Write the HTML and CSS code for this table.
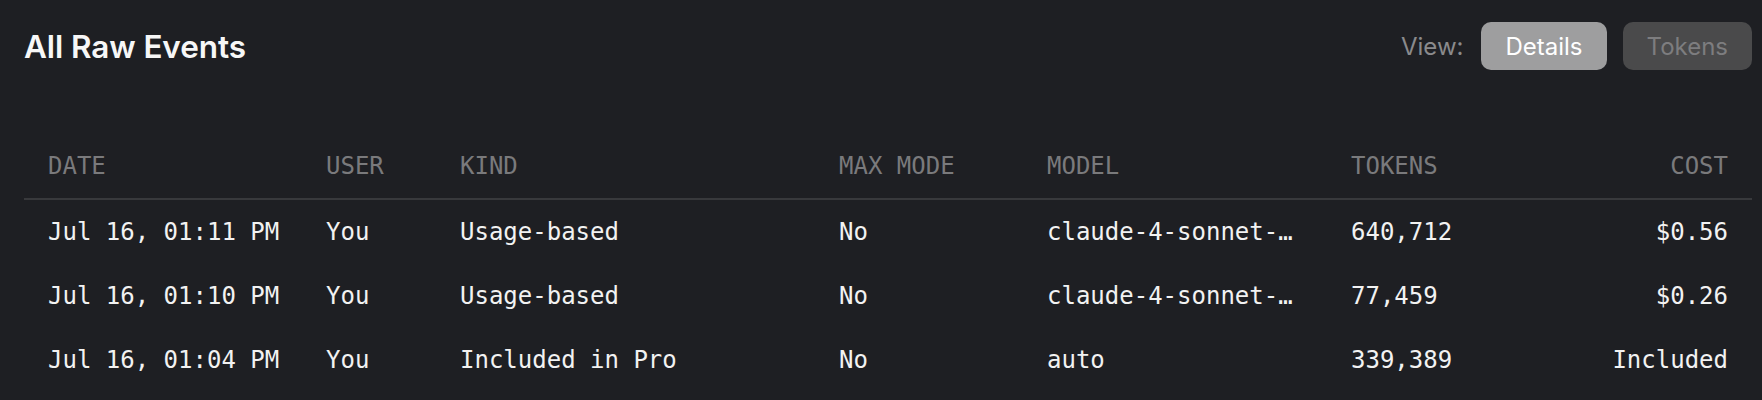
FILE: index.html
```html
<!DOCTYPE html>
<html lang="en">
<head>
<meta charset="utf-8">
<title>All Raw Events</title>
<link rel="stylesheet" href="styles.css">
</head>
<body>
<div class="page">
  <div class="topbar">
    <h1 class="title">All Raw Events</h1>
    <div class="view">
      <span class="view-label">View:</span>
      <button class="seg seg-active">Details</button>
      <button class="seg">Tokens</button>
    </div>
  </div>
  <div class="table">
    <div class="row head">
      <div class="cell">DATE</div>
      <div class="cell">USER</div>
      <div class="cell">KIND</div>
      <div class="cell">MAX MODE</div>
      <div class="cell">MODEL</div>
      <div class="cell">TOKENS</div>
      <div class="cell right">COST</div>
    </div>
    <div class="row">
      <div class="cell">Jul 16, 01:11 PM</div>
      <div class="cell">You</div>
      <div class="cell">Usage-based</div>
      <div class="cell">No</div>
      <div class="cell" title="claude-4-sonnet-thinking">claude-4-sonnet-…</div>
      <div class="cell">640,712</div>
      <div class="cell right">$0.56</div>
    </div>
    <div class="row">
      <div class="cell">Jul 16, 01:10 PM</div>
      <div class="cell">You</div>
      <div class="cell">Usage-based</div>
      <div class="cell">No</div>
      <div class="cell" title="claude-4-sonnet-thinking">claude-4-sonnet-…</div>
      <div class="cell">77,459</div>
      <div class="cell right">$0.26</div>
    </div>
    <div class="row">
      <div class="cell">Jul 16, 01:04 PM</div>
      <div class="cell">You</div>
      <div class="cell">Included in Pro</div>
      <div class="cell">No</div>
      <div class="cell">auto</div>
      <div class="cell">339,389</div>
      <div class="cell right">Included</div>
    </div>
  </div>
</div>
</body>
</html>
```
FILE: styles.css
```css
html, body {
  margin: 0;
  padding: 0;
  background: #1e1f23;
  height: 100%;
}
body {
  font-family: Inter, "Noto Sans", sans-serif;
  color: #f2f2f2;
}
.page {
  padding: 22px 10px 0 24px;
}
.topbar {
  display: flex;
  align-items: center;
  justify-content: space-between;
  height: 48px;
}
.title {
  margin: 0;
  font-size: 31.5px;
  font-weight: 600;
  letter-spacing: -0.1px;
  color: #f7f7f7;
}
.view {
  display: flex;
  align-items: center;
  gap: 16px;
}
.view-label {
  font-size: 24px;
  color: #8a8a8c;
  margin-right: 2px;
}
.seg {
  height: 48px;
  padding: 0 24px;
  border: none;
  border-radius: 10px;
  background: #4a4a4b;
  color: #7d7d7f;
  font-family: Inter, "Noto Sans", sans-serif;
  font-size: 24px;
  font-weight: 400;
}
.seg-active {
  background: #9e9e9f;
  color: #ffffff;
}
.table {
  margin-top: 64px;
  font-family: "DejaVu Sans Mono", "Liberation Mono", monospace;
  font-size: 24px;
}
.row {
  display: grid;
  grid-template-columns: 278px 134px 379px 208px 304px 250px 1fr;
  height: 64px;
}
.head {
  color: #7a7a7c;
  border-bottom: 2px solid #38393c;
}
.cell {
  padding: 0 24px;
  line-height: 64px;
  white-space: nowrap;
}
.right {
  text-align: right;
}
```
